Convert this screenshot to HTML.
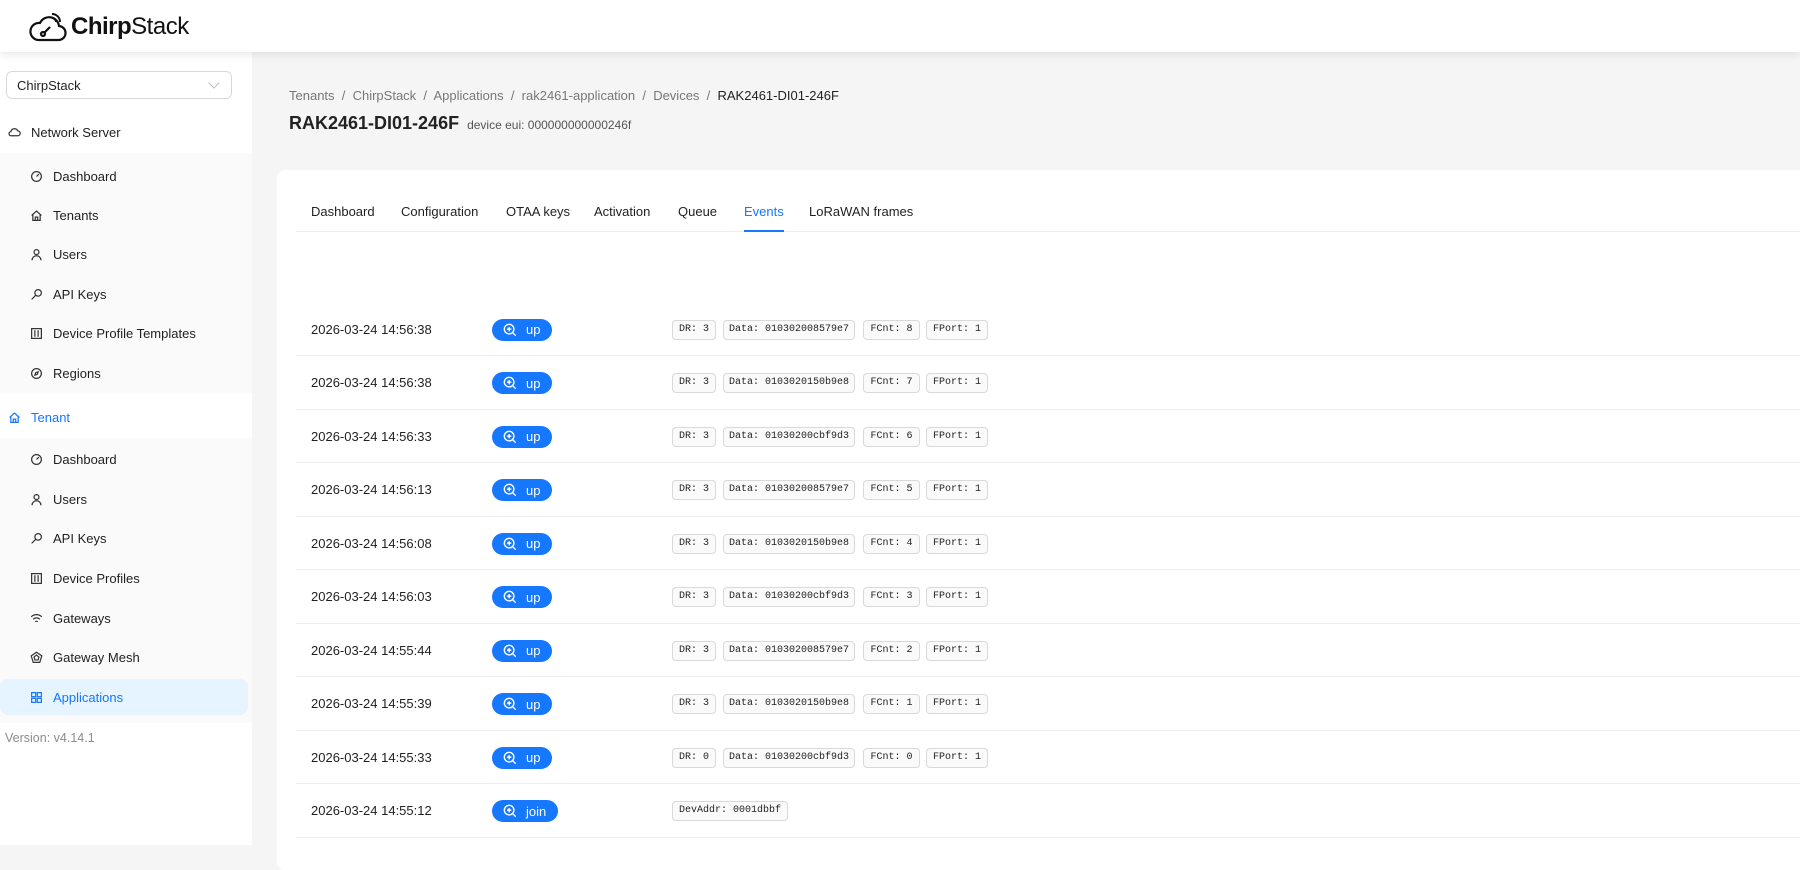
<!DOCTYPE html>
<html><head><meta charset="utf-8"><style>
*{box-sizing:border-box;margin:0;padding:0}
body{width:1800px;height:845px;overflow:hidden;background:#f5f5f5;font-family:"Liberation Sans",sans-serif;color:rgba(0,0,0,.88);font-size:13px;position:relative}
.hdr{position:absolute;left:0;top:0;width:1800px;height:52px;background:#fff;box-shadow:0 2px 8px rgba(0,0,0,.1);z-index:2}
.logo{position:absolute;left:28px;top:10px;display:flex;align-items:center;font-size:24px;color:#111;letter-spacing:-0.5px}
.side{position:absolute;left:0;top:52px;width:252px;height:793px;background:#fff}
.sel{position:absolute;left:6px;top:71px;width:226px;height:28px;border:1px solid #d9d9d9;border-radius:6px;padding:6px 10px;font-size:13px}
.sel:after{content:"";position:absolute;right:13px;top:7px;width:7px;height:7px;border-right:1px solid #bbb;border-bottom:1px solid #bbb;transform:rotate(45deg)}
.sub{position:absolute;left:0;width:252px;background:#fafafa}
.mi{position:absolute;left:0;width:252px;height:36px;display:flex;align-items:center;font-size:13px}
.mi svg{width:13px;height:13px;margin-right:10px;fill:none;stroke:#333;stroke-width:1.5}
.l1{padding-left:8px}.l2{padding-left:30px}
.act{background:#e6f4ff;color:#1677ff;border-radius:8px;width:248px}
.act svg{stroke:#1677ff}
.ver{position:absolute;left:5px;top:731px;color:#8c8c8c;font-size:12.5px}
.bc{position:absolute;left:289px;top:88px;color:#777;font-size:13px}
.bc b{font-weight:normal;color:#222}
.title{position:absolute;left:289px;top:113px;font-size:18px;font-weight:bold;color:#222}
.title span{font-size:12px;font-weight:normal;color:#555;margin-left:8px}
.card{position:absolute;left:277px;top:170px;width:1540px;height:700px;background:#fff;border-radius:8px}
.tabs{position:absolute;left:296px;top:196px;width:1520px;height:36px;border-bottom:1px solid #eee}
.tab{position:absolute;top:8px;font-size:13px}
.tab.on{color:#1677ff}
.tab.on:after{content:"";position:absolute;left:0;right:0;top:26px;height:2px;background:#1677ff}
.row{position:absolute;left:296px;width:1520px;height:53.5px;border-bottom:1px solid #eee}
.ts{position:absolute;left:15px;top:19px;font-size:13px}
.bd{position:absolute;left:196px;top:16px;height:22px;border-radius:11px;background:#1677ff;color:#fff;font-size:13px;display:flex;align-items:center;padding:0 12px 0 11px}
.bd svg{width:14px;height:14px;margin-right:9px;fill:none;stroke:#fff;stroke-width:1.6}
.tg{position:absolute;top:17px;height:20px;border:1px solid #d9d9d9;background:#fafafa;border-radius:4px;font-family:"Liberation Mono",monospace;font-size:10px;line-height:18px;text-align:center;color:#222;white-space:nowrap}
</style></head><body>
<div class="hdr"><div class="logo"><svg width="40" height="34" viewBox="0 0 40 34" fill="none" stroke="#111" stroke-width="2.2"><path d="M10 30 H30 a7 7 0 0 0 1-14 a10 10 0 0 0-19-3 a8 8 0 0 0-2 17z"/><path d="M24 4a8 8 0 0 1 8 8M24 8a4 4 0 0 1 4 4" stroke-width="2"/><circle cx="15" cy="24" r="2"/><path d="M16.5 22.5 L22 17"/></svg><span style="margin-left:3px"><b>Chirp</b>Stack</span></div></div>
<div class="side"></div>
<div class="sel">ChirpStack</div>
<div class="sub" style="top:153px;height:240px"></div>
<div class="sub" style="top:438px;height:285px"></div>
<div class="mi l1" style="top:114px"><svg viewBox="0 0 16 16"><path d="M4 12h8a3 3 0 0 0 0-6a4.5 4.5 0 0 0-8.5 1A2.5 2.5 0 0 0 4 12z"/></svg>Network Server</div>
<div class="mi l2" style="top:158px"><svg viewBox="0 0 16 16"><circle cx="8" cy="8" r="6"/><path d="M8 8l3-3"/></svg>Dashboard</div>
<div class="mi l2" style="top:197px"><svg viewBox="0 0 16 16"><path d="M2 8L8 2.5 14 8M3.5 7v7h9V7M6.5 14v-4h3v4"/></svg>Tenants</div>
<div class="mi l2" style="top:236px"><svg viewBox="0 0 16 16"><circle cx="8" cy="5" r="3"/><path d="M2.5 15a5.5 5.5 0 0 1 11 0"/></svg>Users</div>
<div class="mi l2" style="top:276px"><svg viewBox="0 0 16 16"><circle cx="10" cy="6" r="4"/><path d="M7 9l-5 5"/></svg>API Keys</div>
<div class="mi l2" style="top:315px"><svg viewBox="0 0 16 16"><rect x="2" y="2" width="12" height="12"/><path d="M6 4v8M10 4v8"/></svg>Device Profile Templates</div>
<div class="mi l2" style="top:355px"><svg viewBox="0 0 16 16"><circle cx="8" cy="8" r="6"/><path d="M10 6l-3 1-1 3 3-1z"/></svg>Regions</div>
<div class="mi l1" style="top:399px;color:#1677ff"><svg viewBox="0 0 16 16" style="stroke:#1677ff"><path d="M2 8L8 2.5 14 8M3.5 7v7h9V7M6.5 14v-4h3v4"/></svg>Tenant</div>
<div class="mi l2" style="top:441px"><svg viewBox="0 0 16 16"><circle cx="8" cy="8" r="6"/><path d="M8 8l3-3"/></svg>Dashboard</div>
<div class="mi l2" style="top:481px"><svg viewBox="0 0 16 16"><circle cx="8" cy="5" r="3"/><path d="M2.5 15a5.5 5.5 0 0 1 11 0"/></svg>Users</div>
<div class="mi l2" style="top:520px"><svg viewBox="0 0 16 16"><circle cx="10" cy="6" r="4"/><path d="M7 9l-5 5"/></svg>API Keys</div>
<div class="mi l2" style="top:560px"><svg viewBox="0 0 16 16"><rect x="2" y="2" width="12" height="12"/><path d="M6 4v8M10 4v8"/></svg>Device Profiles</div>
<div class="mi l2" style="top:600px"><svg viewBox="0 0 16 16"><path d="M1.5 6a9 9 0 0 1 13 0M4 9a5.5 5.5 0 0 1 8 0M6.5 12a2 2 0 0 1 3 0"/></svg>Gateways</div>
<div class="mi l2" style="top:639px"><svg viewBox="0 0 16 16"><path d="M8 1.5l6.5 4.5-2.5 8H4L1.5 6z"/><path d="M8 5l3 2.5-1 3.5H6L5 7.5z"/></svg>Gateway Mesh</div>
<div class="mi l2 act" style="top:679px"><svg viewBox="0 0 16 16"><rect x="2" y="2" width="5" height="5"/><rect x="9" y="2" width="5" height="5"/><rect x="2" y="9" width="5" height="5"/><rect x="9" y="9" width="5" height="5"/></svg>Applications</div>
<div class="ver">Version: v4.14.1</div>

<div class="bc">Tenants &nbsp;/&nbsp; ChirpStack &nbsp;/&nbsp; Applications &nbsp;/&nbsp; rak2461-application &nbsp;/&nbsp; Devices &nbsp;/&nbsp; <b>RAK2461-DI01-246F</b></div>
<div class="title">RAK2461-DI01-246F<span>device eui: 000000000000246f</span></div>
<div class="card"></div>
<div class="tabs">
<div class="tab" style="left:15px">Dashboard</div>
<div class="tab" style="left:105px">Configuration</div>
<div class="tab" style="left:210px">OTAA keys</div>
<div class="tab" style="left:298px">Activation</div>
<div class="tab" style="left:382px">Queue</div>
<div class="tab on" style="left:448px">Events</div>
<div class="tab" style="left:513px">LoRaWAN frames</div>
</div>
<div id="rows"></div>
<script>
var d=[["14:56:38","010302008579e7",8,3],["14:56:38","0103020150b9e8",7,3],["14:56:33","01030200cbf9d3",6,3],["14:56:13","010302008579e7",5,3],["14:56:08","0103020150b9e8",4,3],["14:56:03","01030200cbf9d3",3,3],["14:55:44","010302008579e7",2,3],["14:55:39","0103020150b9e8",1,3],["14:55:33","01030200cbf9d3",0,0]];
var ic='<svg viewBox="0 0 16 16"><circle cx="7" cy="7" r="5.5"/><path d="M7 4.5v5M4.5 7h5M11 11l3.5 3.5"/></svg>';
var h='';
d.forEach(function(r,i){h+='<div class="row" style="top:'+(302.5+i*53.5)+'px"><div class="ts">2026-03-24 '+r[0]+'</div><div class="bd">'+ic+'up</div><div class="tg" style="left:376px;width:44px">DR: '+r[3]+'</div><div class="tg" style="left:427px;width:132px">Data: '+r[1]+'</div><div class="tg" style="left:567px;width:57px">FCnt: '+r[2]+'</div><div class="tg" style="left:630px;width:62px">FPort: 1</div></div>';});
h+='<div class="row" style="top:'+(302.5+9*53.5)+'px"><div class="ts">2026-03-24 14:55:12</div><div class="bd">'+ic+'join</div><div class="tg" style="left:376px;width:116px">DevAddr: 0001dbbf</div></div>';
document.getElementById('rows').innerHTML=h;
</script>
</body></html>
